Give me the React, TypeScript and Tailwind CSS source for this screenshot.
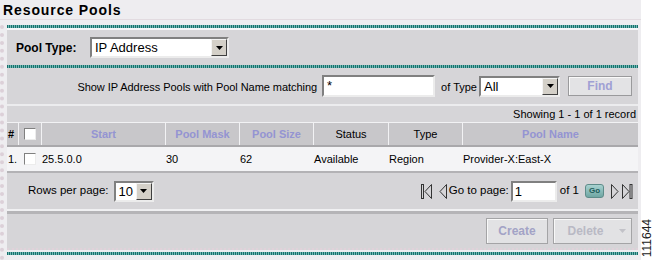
import type { ReactNode } from 'react';

const SUNKEN =
  'border-2 border-t-[#808080] border-l-[#808080] border-b-[#ececec] border-r-[#ececec] bg-white';

/** The teal dotted rule that frames the panel. */
function Stripe() {
  return (
    <div className="h-[3px] bg-[repeating-linear-gradient(90deg,#17706c_0px,#17706c_1px,#72b8b4_1px,#72b8b4_2px)]" />
  );
}

function DownArrow({ color = '#000' }: { color?: string }) {
  return (
    <svg width="7" height="4" viewBox="0 0 7 4">
      <path d="M0 0h7L3.5 4z" fill={color} />
    </svg>
  );
}

interface SelectProps {
  value: string;
  className: string;
}

/** Old-style Windows combo box. */
function Select({ value, className }: SelectProps) {
  return (
    <div className={`flex h-[21px] ${SUNKEN} ${className}`}>
      <span className="flex-1 pl-[3px] text-[13px] leading-[17px]">{value}</span>
      <span className="flex h-[17px] w-[16px] items-center justify-center border border-t-[#f4f4f4] border-l-[#f4f4f4] border-b-[#404040] border-r-[#404040] bg-[#d4d0c8]">
        <DownArrow />
      </span>
    </div>
  );
}

function Checkbox() {
  return <span className={`block h-[12px] w-[12px] ${SUNKEN} border-[1.5px]`} />;
}

function HeadCell({ children, link = false }: { children?: ReactNode; link?: boolean }) {
  return (
    <div
      className={`flex items-center justify-center bg-[#c8c7ca] ${
        link ? 'font-bold text-[#9494d2]' : 'text-black'
      }`}
    >
      {children}
    </div>
  );
}

function PageIcon({ kind }: { kind: 'first' | 'prev' | 'next' | 'last' }) {
  const stroke = '#333';
  if (kind === 'first')
    return (
      <svg width="11" height="15" viewBox="0 0 11 15">
        <rect x="0.5" y="0.5" width="2" height="14" fill="none" stroke={stroke} />
        <path d="M10.5 0.5v14L4 7.5z" fill="none" stroke={stroke} />
      </svg>
    );
  if (kind === 'prev')
    return (
      <svg width="8" height="15" viewBox="0 0 8 15">
        <path d="M7.5 0.5v14L1 7.5z" fill="none" stroke={stroke} />
      </svg>
    );
  if (kind === 'next')
    return (
      <svg width="8" height="15" viewBox="0 0 8 15">
        <path d="M0.5 0.5v14L7 7.5z" fill="none" stroke={stroke} />
      </svg>
    );
  return (
    <svg width="11" height="15" viewBox="0 0 11 15">
      <path d="M0.5 0.5v14L7 7.5z" fill="none" stroke={stroke} />
      <rect x="8" y="0.5" width="2" height="14" fill="none" stroke={stroke} />
    </svg>
  );
}

const COLS = 'grid-cols-[11px_22px_123px_73px_73px_74px_73px_1fr]';

export default function App() {
  return (
    <div className="flex h-[260px] w-[655px] overflow-hidden bg-white font-['Liberation_Sans',Arial,sans-serif] text-[11px] text-black">
      <div className="flex w-[641px] flex-col bg-[#eeedf0]">
        <div className="h-[20px] border-b border-[#e2dbe0] pl-[3px] pt-[2px] text-[14px] font-bold leading-[16px] tracking-[0.9px]">
          Resource Pools
        </div>

        <div className="flex flex-1 pt-[5px]">
          <div className="w-[7px] border-l-[4px] border-dotted border-[#dcd0d8]" />

          <div className="flex w-[631px] flex-col">
            <Stripe />
            <div className="h-[2px] bg-[#f6f6f8]" />
            <div className="flex h-[35px] items-center bg-[#d6d5d8] pl-[9px]">
              <span className="w-[74px] text-[12px] font-bold">Pool Type:</span>
              <Select value="IP Address" className="w-[139px]" />
            </div>
            <Stripe />

            <div className="flex h-[36px] items-center justify-end bg-[#d6d5d8] pr-[6px]">
              <span className="pt-[3px] tracking-[-0.05px]">Show IP Address Pools with Pool Name matching</span>
              <div className={`ml-[5px] h-[22px] w-[113px] ${SUNKEN} pl-[3px] text-[13px] leading-[18px]`}>*</div>
              <span className="ml-[6px] pt-[3px]">of Type</span>
              <Select value="All" className="ml-[2px] w-[81px]" />
              <button
                type="button"
                className="ml-[8px] h-[20px] w-[64px] border border-[#9a9a9c] bg-[#e3e3e5] text-[12px] font-bold text-[#a0a0d4] shadow-[inset_1px_1px_0_#fafafa]"
              >
                Find
              </button>
            </div>

            <div className="h-[2px] bg-[#ececee]" />
            <div className="flex h-[16px] items-center justify-end bg-[#d6d5d8] pr-[2px]">
              Showing 1 - 1 of 1 record
            </div>
            <div className="h-px bg-[#f2f2f4]" />

            <div className={`grid h-[22px] gap-x-px bg-[#f2f2f4] ${COLS}`}>
              <div className="flex items-center bg-[#c8c7ca] pl-px font-bold">#</div>
              <div className="flex items-center justify-center bg-[#c8c7ca]">
                <Checkbox />
              </div>
              <HeadCell link>Start</HeadCell>
              <HeadCell link>Pool Mask</HeadCell>
              <HeadCell link>Pool Size</HeadCell>
              <HeadCell>Status</HeadCell>
              <HeadCell>Type</HeadCell>
              <HeadCell link>Pool Name</HeadCell>
            </div>
            <div className="h-[2px] bg-[#a9a8ab]" />

            <div className={`grid h-[24px] items-center gap-x-px bg-[#f4f4f6] ${COLS}`}>
              <span className="pl-px">1.</span>
              <span className="flex justify-center">
                <Checkbox />
              </span>
              <span>25.5.0.0</span>
              <span>30</span>
              <span>62</span>
              <span>Available</span>
              <span>Region</span>
              <span>Provider-X:East-X</span>
            </div>
            <div className="h-[2px] bg-[#b3b2b5]" />

            <div className="flex h-[36px] items-center justify-between bg-[#d6d5d8] pl-[21px] pr-[5px]">
              <div className="flex items-center gap-[5px]">
                <span className="text-[11.5px]">Rows per page:</span>
                <Select value="10" className="w-[40px]" />
              </div>
              <div className="flex items-center">
                <PageIcon kind="first" />
                <span className="ml-[7px]">
                  <PageIcon kind="prev" />
                </span>
                <span className="ml-[2px] text-[11.5px]">Go to page:</span>
                <div className={`ml-[2px] h-[21px] w-[46px] ${SUNKEN} pl-[2px] text-[13px] leading-[17px]`}>1</div>
                <span className="ml-[3px] text-[11.5px]">of 1</span>
                <span className="ml-[6px] flex h-[14px] w-[19px] items-center justify-center rounded-[3px] border border-[#5e8c8a] bg-[linear-gradient(#a8d2d0,#6fa6a3)] text-[8px] font-bold text-[#1e5c5a]">
                  Go
                </span>
                <span className="ml-[7px]">
                  <PageIcon kind="next" />
                </span>
                <span className="ml-[3px]">
                  <PageIcon kind="last" />
                </span>
              </div>
            </div>

            <div className="h-[2px] bg-[#f0f0f2]" />
            <div className="h-[3px] bg-[#b5b4b7]" />

            <div className="flex h-[36px] items-center justify-end gap-[5px] border-b-2 border-dotted border-[#e0d2da] bg-[#d6d5d8] pr-[6px]">
              <button
                type="button"
                className="h-[26px] w-[62px] border border-[#a4a4a6] bg-[#e2e2e4] text-[12px] font-bold text-[#a3a3c6] shadow-[inset_1px_1px_0_#f8f8f8]"
              >
                Create
              </button>
              <div className="flex h-[26px] w-[79px] items-center border border-[#a4a4a6] bg-[#e2e2e4] shadow-[inset_1px_1px_0_#f8f8f8]">
                <span className="flex-1 pl-[3px] text-center text-[12px] font-bold text-[#b9b9c4]">Delete</span>
                <span className="flex h-full w-[17px] items-center justify-center">
                  <DownArrow color="#c2c2c8" />
                </span>
              </div>
            </div>
            <div className="h-[2px]" />
            <Stripe />
          </div>
        </div>
      </div>

      <div className="flex flex-1 flex-col justify-end pb-[3px]">
        <span className="rotate-180 text-[12px] leading-[12px] text-[#222] [writing-mode:vertical-rl]">111644</span>
      </div>
    </div>
  );
}
